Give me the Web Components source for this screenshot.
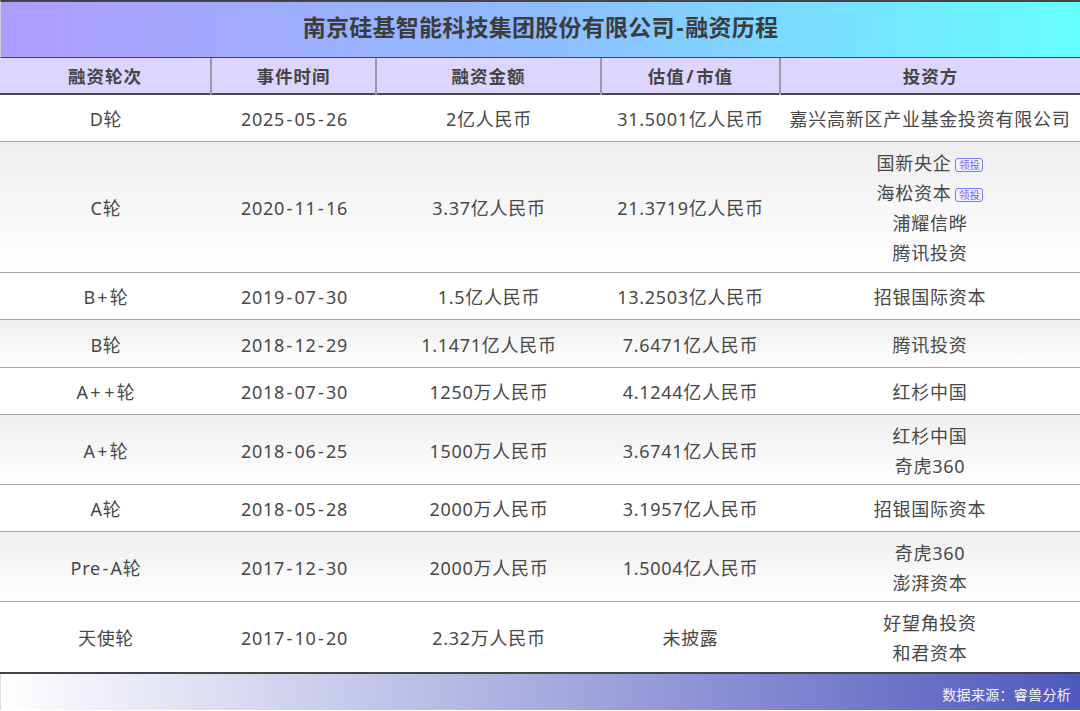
<!DOCTYPE html>
<html lang="zh"><head><meta charset="utf-8">
<style>
html,body{margin:0;padding:0;background:#fff}
body{width:1080px;height:711px;overflow:hidden;font-family:"Noto Sans","Noto Sans CJK SC",sans-serif;color:#444}
</style></head><body>
<fin-table>
<fin-title><span>南京硅基智能科技集团股份有限公司<wide-dash>-</wide-dash>融资历程</span></fin-title>
<fin-head><span>融资轮次</span><span>事件时间</span><span>融资金额</span><span>估值<wide-dash>/</wide-dash>市值</span><span>投资方</span></fin-head>
<fin-row h="47"><span>D轮</span><span>2025<wide-dash>-</wide-dash>05<wide-dash>-</wide-dash>26</span><span>2亿人民币</span><span>31.5001亿人民币</span><span>嘉兴高新区产业基金投资有限公司</span></fin-row>
<fin-row h="131" alt><span>C轮</span><span>2020<wide-dash>-</wide-dash>11<wide-dash>-</wide-dash>16</span><span>3.37亿人民币</span><span>21.3719亿人民币</span><span><div>国新央企<lead-tag>领投</lead-tag></div><div>海松资本<lead-tag>领投</lead-tag></div><div>浦耀信晔</div><div>腾讯投资</div></span></fin-row>
<fin-row h="47"><span>B<wide-dash>+</wide-dash>轮</span><span>2019<wide-dash>-</wide-dash>07<wide-dash>-</wide-dash>30</span><span>1.5亿人民币</span><span>13.2503亿人民币</span><span>招银国际资本</span></fin-row>
<fin-row h="48" alt><span>B轮</span><span>2018<wide-dash>-</wide-dash>12<wide-dash>-</wide-dash>29</span><span>1.1471亿人民币</span><span>7.6471亿人民币</span><span>腾讯投资</span></fin-row>
<fin-row h="47"><span>A<wide-dash>+</wide-dash><wide-dash>+</wide-dash>轮</span><span>2018<wide-dash>-</wide-dash>07<wide-dash>-</wide-dash>30</span><span>1250万人民币</span><span>4.1244亿人民币</span><span>红杉中国</span></fin-row>
<fin-row h="70" alt><span>A<wide-dash>+</wide-dash>轮</span><span>2018<wide-dash>-</wide-dash>06<wide-dash>-</wide-dash>25</span><span>1500万人民币</span><span>3.6741亿人民币</span><span><div>红杉中国</div><div>奇虎360</div></span></fin-row>
<fin-row h="47"><span>A轮</span><span>2018<wide-dash>-</wide-dash>05<wide-dash>-</wide-dash>28</span><span>2000万人民币</span><span>3.1957亿人民币</span><span>招银国际资本</span></fin-row>
<fin-row h="70" alt><span>Pre<wide-dash>-</wide-dash>A轮</span><span>2017<wide-dash>-</wide-dash>12<wide-dash>-</wide-dash>30</span><span>2000万人民币</span><span>1.5004亿人民币</span><span><div>奇虎360</div><div>澎湃资本</div></span></fin-row>
<fin-row h="72" last><span>天使轮</span><span>2017<wide-dash>-</wide-dash>10<wide-dash>-</wide-dash>20</span><span>2.32万人民币</span><span>未披露</span><span><div>好望角投资</div><div>和君资本</div></span></fin-row>
<fin-foot>数据来源：睿兽分析</fin-foot>
</fin-table>
<script>
const HCOLS='212px 165px 225px 179px 1fr';
const COLS='212px 165px 224px 179px 1fr';
function def(name,css,html){
  customElements.define(name,class extends HTMLElement{
    constructor(){super();this.attachShadow({mode:'open'}).innerHTML='<style>'+css+'</style>'+(html||'<slot></slot>');}
    connectedCallback(){
      if(this.hasAttribute('h')) this.style.setProperty('--h',this.getAttribute('h')+'px');
    }
  });
}
def('fin-table',':host{display:flex;flex-direction:column;width:1080px;height:711px;box-sizing:border-box}');
def('fin-title',`:host{display:flex;align-items:center;justify-content:center;box-sizing:border-box;height:58px;padding-bottom:5px;border-top:2px solid #444;border-bottom:1px solid #444;border-left:1px solid #ccd;
 background:linear-gradient(90deg,#b09cff 0%,#8fbcff 50%,#66ffff 100%);font-size:23px;font-weight:700;letter-spacing:.25px;color:#3c3c3c;line-height:1;white-space:nowrap}`);
def('wide-dash',`:host{display:inline-block;padding:0 1.5px}`);
def('fin-head',`:host{display:grid;grid-template-columns:${HCOLS};box-sizing:border-box;height:37px;background:#ded5ff;border-bottom:2px solid #4a4a4a;font-size:17.5px;font-weight:700;letter-spacing:1px;color:#444}
 ::slotted(span){display:block;text-align:center;line-height:37px;box-sizing:border-box;border-right:2px solid #9b97ad}
 ::slotted(span:last-child){border-right:0}`);
def('fin-row',`:host{display:grid;grid-template-columns:${COLS};align-items:center;box-sizing:border-box;height:var(--h);background:#fff;border-bottom:1px solid #a6a6a6;font-size:18px;letter-spacing:.72px;color:#484848}
 :host([alt]){background:linear-gradient(180deg,#efefef,#fff)}
 :host([last]){border-bottom:2px solid #444}
 ::slotted(span){display:block;text-align:center;padding-top:2px;line-height:30px;white-space:nowrap}`);
def('lead-tag',`:host{display:inline-block;box-sizing:border-box;margin-left:4px;width:28px;height:14px;line-height:12px;border:1px solid #7d78f5;border-radius:3px;font-size:10.5px;letter-spacing:0;color:#6a66ee;text-align:center;vertical-align:1px;background:#f3f3ff}`);
def('fin-foot',`:host{display:flex;align-items:center;justify-content:flex-end;box-sizing:border-box;height:36px;padding:4px 9px 0 0;background:linear-gradient(90deg,#fff 0%,#4f58bd 100%);font-size:14px;letter-spacing:.3px;color:#f4f4ff;border-left:1px solid #ddd}`);
</script>
</body></html>
